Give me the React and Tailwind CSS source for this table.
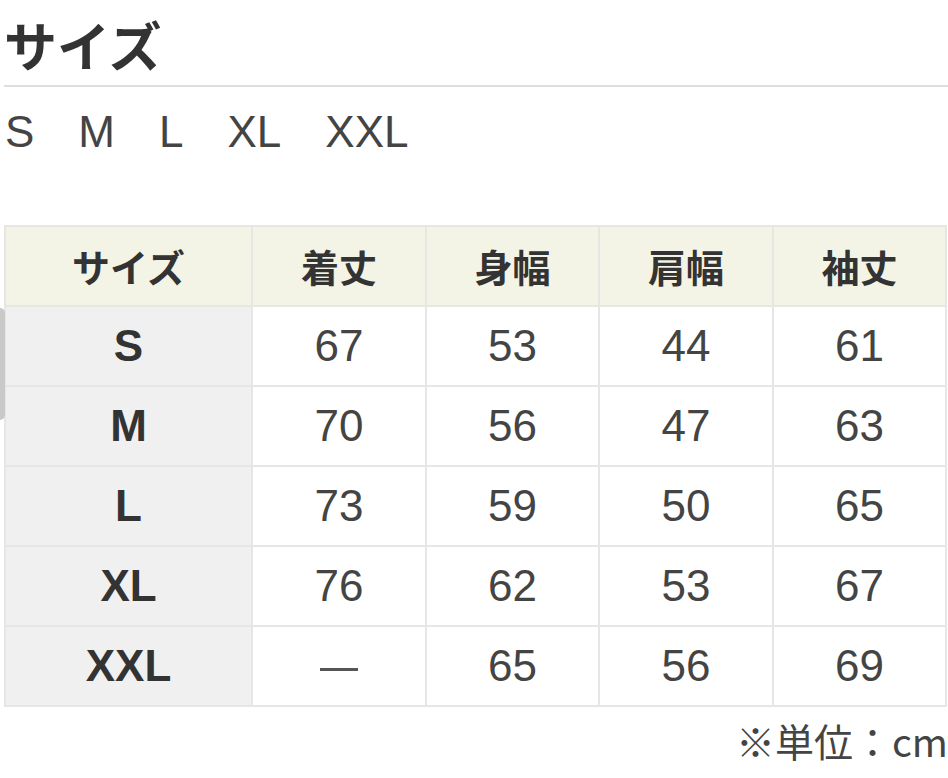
const sizes = ["S", "M", "L", "XL", "XXL"];

const headers = ["サイズ", "着丈", "身幅", "肩幅", "袖丈"];

const rows = [
  { size: "S", values: ["67", "53", "44", "61"] },
  { size: "M", values: ["70", "56", "47", "63"] },
  { size: "L", values: ["73", "59", "50", "65"] },
  { size: "XL", values: ["76", "62", "53", "67"] },
  { size: "XXL", values: ["—", "65", "56", "69"] },
];

const jp = "font-['Noto_Sans_CJK_JP',sans-serif]";
const latin = "font-['Liberation_Sans','Noto_Sans_CJK_JP',sans-serif]";

export default function App() {
  return (
    <div className="relative w-[948px] h-[778px] bg-white text-[#333] overflow-hidden">
      {/* scroll hint on the left edge */}
      <div className="absolute left-0 top-[308px] w-[5px] h-[112px] rounded-r-md bg-[#c9c9c9]" />

      {/* ── Title ── */}
      <div className="pl-[4px] pt-[18px]">
        <h1 className={`${jp} text-[53px] leading-none font-bold text-[#333]`}>サイズ</h1>
      </div>
      <div className="mt-[14px] ml-[4px] h-[2px] bg-[#dedede]" />

      {/* ── Available sizes ── */}
      <div className={`${latin} mt-[23px] pl-[5px] flex gap-[44px] text-[44px] leading-none text-[#444]`}>
        {sizes.map((s) => (
          <span key={s}>{s}</span>
        ))}
      </div>

      {/* ── Size table ── */}
      <table className="mt-[71px] ml-[4px] w-[941px] table-fixed border-collapse">
        <colgroup>
          <col className="w-[247px]" />
          <col className="w-[174px]" />
          <col className="w-[173px]" />
          <col className="w-[174px]" />
          <col className="w-[173px]" />
        </colgroup>
        <thead>
          <tr className="h-[80px] bg-[#f3f3e6]">
            {headers.map((h) => (
              <th
                key={h}
                className={`${jp} border-2 border-[#e6e6e2] text-[38px] font-bold text-[#333] text-center align-middle leading-none`}
              >
                {h}
              </th>
            ))}
          </tr>
        </thead>
        <tbody>
          {rows.map((r) => (
            <tr key={r.size} className="h-[80px]">
              <td className={`${latin} border-2 border-[#e6e6e6] bg-[#f0f0f0] text-[44px] font-bold text-[#333] text-center leading-none`}>
                {r.size}
              </td>
              {r.values.map((v, i) => (
                <td
                  key={i}
                  className={`${latin} border-2 border-[#e6e6e6] bg-white text-[44px] text-[#444] text-center leading-none`}
                >
                  {v === "—" ? <span className="inline-block w-[38px] h-[3px] bg-[#555] align-middle" /> : v}
                </td>
              ))}
            </tr>
          ))}
        </tbody>
      </table>

      {/* ── Unit note ── */}
      <p className={`${jp} mt-[14px] text-right text-[39px] leading-none text-[#444]`}>
        ※単位：cm
      </p>
    </div>
  );
}
